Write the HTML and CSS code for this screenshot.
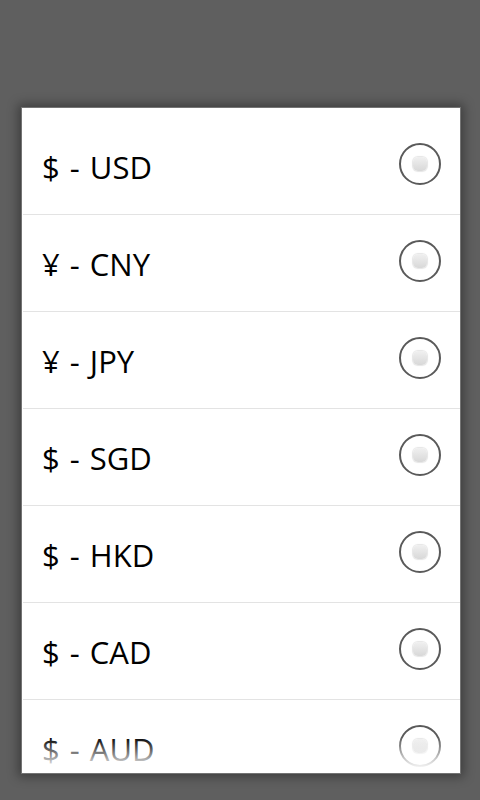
FILE: index.html
```html
<!DOCTYPE html>
<html>
<head>
<meta charset="utf-8">
<link rel="stylesheet" href="styles.css">
</head>
<body>
<div class="dialog">
  <ul class="list">
    <li class="row"><span class="label">$ - USD</span><span class="radio"><span class="dot"></span></span></li>
    <li class="row"><span class="label">¥ - CNY</span><span class="radio"><span class="dot"></span></span></li>
    <li class="row"><span class="label">¥ - JPY</span><span class="radio"><span class="dot"></span></span></li>
    <li class="row"><span class="label">$ - SGD</span><span class="radio"><span class="dot"></span></span></li>
    <li class="row"><span class="label">$ - HKD</span><span class="radio"><span class="dot"></span></span></li>
    <li class="row"><span class="label">$ - CAD</span><span class="radio"><span class="dot"></span></span></li>
    <li class="row"><span class="label">$ - AUD</span><span class="radio"><span class="dot"></span></span></li>
  </ul>
  <div class="fade"></div>
</div>
</body>
</html>
```
FILE: styles.css
```css
html, body {
  margin: 0;
  padding: 0;
  background: #5f5f5f;
  height: 100%;
}
body {
  padding-top: 107px;
  padding-left: 21px;
  box-sizing: border-box;
}
.dialog {
  position: relative;
  width: 438px;
  height: 665px;
  background: #fff;
  border: 1px solid #747474;
  box-shadow: 0 0 10px 3px rgba(0,0,0,0.35);
  overflow: hidden;
}
.list {
  list-style: none;
  margin: 0;
  padding: 10px 0 0 0;
}
.row {
  height: 96px;
  display: flex;
  align-items: center;
  justify-content: space-between;
  padding: 0 19px 0 19px;
  margin-left: 1px;
  border-bottom: 1px solid #e3e3e3;
  box-sizing: content-box;
}
.label {
  font-family: "Open Sans", "Noto Sans", sans-serif;
  font-size: 31px;
  word-spacing: 2px;
  color: #000;
  margin-top: 2px;
}
.radio {
  width: 38px;
  height: 38px;
  border: 2px solid #5a5a5a;
  border-radius: 50%;
  display: flex;
  align-items: center;
  justify-content: center;
  margin-top: -4px;
}
.dot {
  width: 14px;
  height: 14px;
  border-radius: 5px;
  background: linear-gradient(#f0f0f0, #d8d8d8);
  box-shadow: 0 0 1px 1px rgba(0,0,0,0.1);
}
.fade {
  position: absolute;
  left: 0;
  right: 0;
  bottom: 0;
  height: 36px;
  background: linear-gradient(rgba(255,255,255,0), #fff 90%);
}
```
